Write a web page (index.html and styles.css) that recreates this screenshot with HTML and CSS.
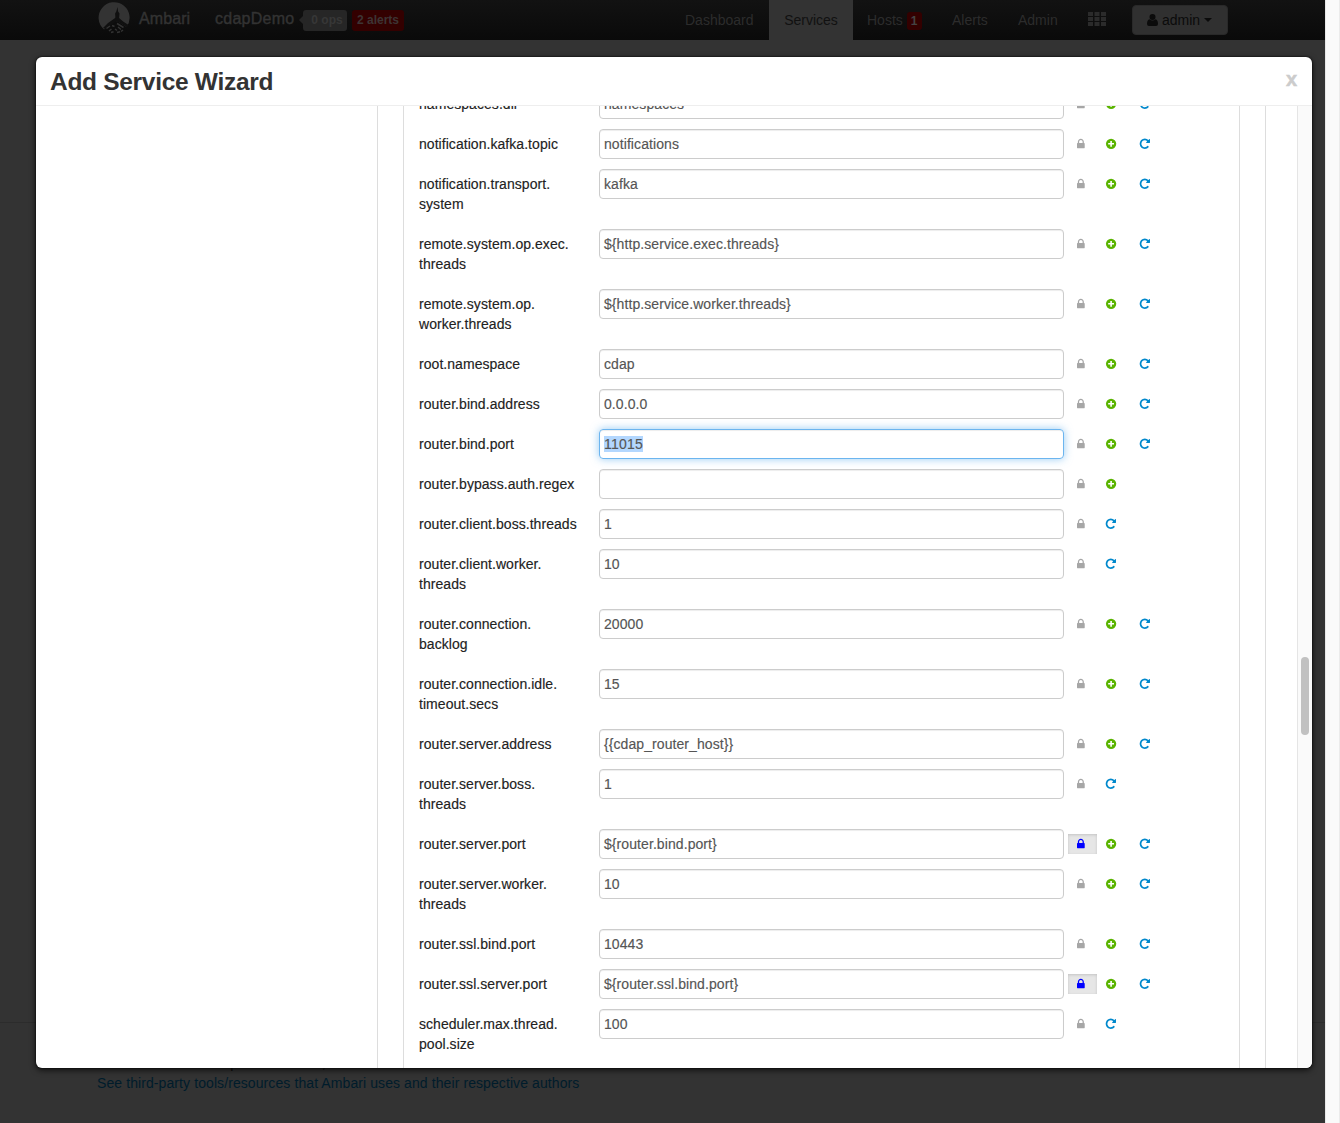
FILE: index.html
```html
<!DOCTYPE html>
<html lang="en">
<head>
<meta charset="utf-8">
<title>Ambari - cdapDemo</title>
<link rel="stylesheet" href="styles.css">
</head>
<body>
<svg class="sprite" aria-hidden="true">
  <symbol id="lock" viewBox="-149 9 1493 1792"><path d="M320 768h512v-192q0-106-75-181t-181-75-181 75-75 181v192zM1152 864v576q0 40-28 68t-68 28h-960q-40 0-68-28t-28-68v-576q0-40 28-68t68-28h32v-192q0-184 132-316t316-132 316 132 132 316v192h32q40 0 68 28t28 68z"/></symbol>
  <symbol id="plus" viewBox="0 0 12 12"><circle cx="6.100" cy="5.800" r="5.150"/><path d="M6.100 2.900v5.800M3.200 5.800h5.800" stroke="#fff" stroke-width="1.600"/></symbol>
  <symbol id="repeat" viewBox="24 38 1790 1790"><path d="M1664 256v448q0 26-19 45t-45 19h-448q-42 0-59-40-17-39 14-69l138-138q-148-137-349-137-104 0-198.5 40.5t-163.5 109.5-109.5 163.5-40.5 198.5 40.5 198.5 109.5 163.5 163.5 109.5 198.5 40.5q119 0 225-52t179-147q7-10 23-12 15 0 25 9l137 138q9 8 9.5 20.5t-7.5 22.5q-109 132-264 204.5t-327 72.5q-156 0-298-61t-245-164-164-245-61-298 61-298 164-245 245-164 298-61q147 0 284.5 55.5t244.5 156.5l130-129q29-31 70-14 39 17 39 59z"/></symbol>
</svg>
<div class="page">
  <nav class="navbar">
    <svg class="logo" viewBox="0 0 32 32"><path d="M6 27.500A15.500 15.500 0 1 1 28.500 25L20 19.500 17.500 19 14 20.500z" fill="#333"/><path d="M19.500 5l.6 4.500 1.400 2-.4 4.500 4 3.500 5.500 3.500-1.500 2.500-8.500-5.500-2.500-.5-10.600 7.500-2.500-1 5-5 6.500-4.500.9-1-.3-4 1.200-2z" fill="#101010"/><path d="M8.500 26.500l3.500-2.500M19 21.500l6.500 4M14 23.500l2.500 1M20 25l3 2.500M11 29l2.500-2M17 27l2 1.500M13 30.500l2.500-.8M19 30.500l3-.8M25 28l-2 1.500" stroke="#333" stroke-width="1.500" fill="none"/></svg>
    <span class="brand">Ambari</span>
    <span class="cluster">cdapDemo</span>
    <span class="badge ops">0 ops</span>
    <span class="badge alerts">2 alerts</span>
    <div class="menu">
      <a class="item dashboard">Dashboard</a>
      <a class="item active">Services</a>
      <a class="item hosts">Hosts <span class="count">1</span></a>
      <a class="item alerts-link">Alerts</a>
      <a class="item admin-link">Admin</a>
      <svg class="grid" viewBox="0 0 18 14"><path d="M0 0h5v4H0zM6.500 0h5v4h-5zM13 0h5v4h-5zM0 5h5v4H0zM6.500 5h5v4h-5zM13 5h5v4h-5zM0 10h5v4H0zM6.500 10h5v4h-5zM13 10h5v4h-5z"/></svg>
      <span class="user"><svg viewBox="0 0 11 12"><circle cx="5.500" cy="3" r="3"/><path d="M2.500 5.200Q5.500 7.800 8.500 5.200 11 6 11 10q0 2-2 2H2q-2 0-2-2 0-4 2.500-4.800z"/></svg>admin<i class="caret"></i></span>
    </div>
  </nav>
  <footer class="footer">
    <p>Licensed under the Apache License, Version 2.0.</p>
    <a>See third-party tools/resources that Ambari uses and their respective authors</a>
  </footer>
</div>
<div class="page-scroll"></div>

<section class="modal">
  <header class="modal-header"><h3>Add Service Wizard</h3><span class="close">x</span></header>
  <div class="modal-body">
    <div class="steps"></div>
    <div class="content"><div class="panel" id="properties"></div></div>
    <div class="scrollbar"><div class="thumb"></div></div>
  </div>
</section>
<script src="app.js"></script>
</body>
</html>
```
FILE: styles.css
```css
*, ::before, ::after { box-sizing: border-box; }
body {
  margin: 0;
  height: 1123px;
  display: flex;
  overflow: hidden;
  background: #333;
  color: #333;
  font: 14px/20px "Liberation Sans", Arial, sans-serif;
}
.sprite { position: absolute; width: 0; height: 0; }
.page { width: 1325px; display: flex; flex-direction: column; }
.page-scroll { width: 15px; background: #fafafa; border-left: 1px solid #e8e8e8; border-right: 1px solid #ebebeb; }

.navbar {
  height: 40px;
  display: flex;
  align-items: center;
  padding-left: 98px;
  background: linear-gradient(#121212, #0a0a0a);
  color: #333;
}
.logo { width: 32px; height: 32px; margin: -4px 9px 0 0; }
.brand, .cluster { font-size: 16px; margin-top: -3px; -webkit-text-stroke: .4px #333; }
.brand { width: 76px; letter-spacing: .1px; }
.cluster { width: 88px; letter-spacing: .25px; }
.badge { height: 21px; border-radius: 3px; font-weight: bold; font-size: 12px; line-height: 21px; text-align: center; }
.ops { width: 44px; background: #262626; color: #373737; position: relative; padding-left: 4px; }
.ops::before { content: ""; position: absolute; left: -4px; top: 6px; border: 4px solid transparent; border-left: 0; border-right-color: #262626; }
.alerts { width: 52px; margin-left: 5px; background: #300; color: #3d3434; }
.menu { display: flex; align-items: center; margin-left: 281px; height: 40px; color: #2c2c2c; }
.item { line-height: 40px; height: 40px; white-space: nowrap; }
.dashboard { width: 84px; }
.active { width: 84px; background: #333; color: #111; text-align: center; }
.hosts { width: 99px; padding-left: 14px; }
.count { display: inline-block; width: 15px; height: 18px; border-radius: 3px; background: #300; color: #444; font: bold 12px/18px "Liberation Sans", sans-serif; text-align: center; vertical-align: 0; }
.alerts-link { width: 66px; }
.admin-link { width: 70px; }
.grid { width: 18px; height: 14px; fill: #2b2b2b; margin-top: -2px; }
.user { display: flex; align-items: center; width: 96px; height: 30px; margin-left: 26px; padding-left: 14px; border-radius: 4px; background: #303030; border: 1px solid #292929; color: #0b0b0b; }
.user svg { width: 11px; height: 12px; margin-right: 4px; fill: #0b0b0b; }
.caret { margin-left: 4px; border: 4px solid transparent; border-top-color: #0b0b0b; border-bottom: 0; }

.footer { margin-top: 982px; height: 101px; padding: 30px 97px 0; border-top: 1px solid #2c2c2c; color: #0b0b0b; letter-spacing: .09px; }
.footer p { margin: 0; }
.footer a { color: #001c2b; }

.modal {
  position: absolute;
  left: 36px;
  top: 57px;
  width: 1276px;
  height: 1011px;
  display: flex;
  flex-direction: column;
  overflow: hidden;
  border-radius: 6px;
  background: #fff;
  box-shadow: 0 2px 6px rgba(0, 0, 0, .75), 0 0 2px #000;
}
.modal-header { height: 49px; flex: none; display: flex; justify-content: space-between; padding: 0 15px 0 14px; border-bottom: 1px solid #eee; }
.modal-header h3 { margin: 0; font-size: 24.500px; line-height: 49px; letter-spacing: -.3px; white-space: nowrap; }
.close { font-size: 20px; font-weight: bold; line-height: 45px; color: #ccc; -webkit-text-stroke: .5px #ccc; }
.modal-body { flex: 1; min-height: 0; display: flex; }
.steps { width: 342px; border-right: 1px solid #ddd; }
.content { flex: 1; padding-left: 25px; overflow: hidden; display: flex; }
.panel { width: 837px; height: 962px; overflow: hidden; border-left: 1px solid #ddd; border-right: 1px solid #ddd; padding-left: 15px; letter-spacing: .08px; }
.content::after { content: ""; width: 26px; border-right: 1px solid #ddd; }
.panel, .content::after { flex: none; }
.scrollbar { width: 15px; padding: 551px 3px 0; background: #fafafa; border-left: 1px solid #e5e5e5; }
.thumb { width: 8px; height: 78px; border-radius: 4px; background: #c1c1c1; }

.row { display: flex; align-items: flex-start; }
.row:first-child { margin-top: -17px; }
.name { width: 180px; padding: 5px 0 15px; color: #222; letter-spacing: .05px; white-space: pre-line; }
.field { width: 465px; height: 30px; padding: 4px; border: 1px solid #ccc; border-radius: 4px; color: #555; font: inherit; box-shadow: inset 0 1px 1px rgba(0, 0, 0, .075); white-space: pre; }
.name, .field { -webkit-text-stroke: .15px currentColor; }
.field.focused { border-color: #6cb5ef; box-shadow: inset 0 1px 1px rgba(0, 0, 0, .075), 0 0 8px rgba(82, 168, 236, .6); }
.field.focused span { display: inline-block; height: 16px; margin-top: 2px; line-height: 16px; letter-spacing: .25px; background: #b3d7fe; }
.lock { width: 29px; height: 20px; margin: 5px 8px 0 4px; padding: 4px 8px; display: flex; fill: #a6a6a6; }
.lock svg { width: 10px; height: 12px; flex: none; }
.lock.final { background: #e6e6e6; box-shadow: inset 0 1px 3px rgba(0, 0, 0, .15); fill: #00f; }
.action { width: 12px; height: 12px; margin: 9px 22px 0 0; }
.plus { fill: #5ab400; }
.repeat { fill: #08c; }
```
FILE: app.js
```js
// name, value, available actions (p = add override, r = restore default), state
const properties = [
  ["namespaces.dir", "namespaces", "pr"],
  ["notification.kafka.topic", "notifications", "pr"],
  ["notification.transport.\nsystem", "kafka", "pr"],
  ["remote.system.op.exec.\nthreads", "${http.service.exec.threads}", "pr"],
  ["remote.system.op.\nworker.threads", "${http.service.worker.threads}", "pr"],
  ["root.namespace", "cdap", "pr"],
  ["router.bind.address", "0.0.0.0", "pr"],
  ["router.bind.port", "11015", "pr", "focused"],
  ["router.bypass.auth.regex", "", "p"],
  ["router.client.boss.threads", "1", "r"],
  ["router.client.worker.\nthreads", "10", "r"],
  ["router.connection.\nbacklog", "20000", "pr"],
  ["router.connection.idle.\ntimeout.secs", "15", "pr"],
  ["router.server.address", "{{cdap_router_host}}", "pr"],
  ["router.server.boss.\nthreads", "1", "r"],
  ["router.server.port", "${router.bind.port}", "pr", "final"],
  ["router.server.worker.\nthreads", "10", "pr"],
  ["router.ssl.bind.port", "10443", "pr"],
  ["router.ssl.server.port", "${router.ssl.bind.port}", "pr", "final"],
  ["scheduler.max.thread.\npool.size", "100", "r"]
];
const icon = (id, cls) => `<svg class="${cls}"><use href="#${id}"/></svg>`;
document.getElementById("properties").innerHTML = properties.map(([name, value, actions, state]) => `
  <div class="row">
    <div class="name">${name}</div>
    <div class="field ${state === "focused" ? "focused" : ""}"><span>${value}</span></div>
    <div class="lock ${state === "final" ? "final" : ""}">${icon("lock", "")}</div>
    ${actions.includes("p") ? icon("plus", "action plus") : ""}
    ${actions.includes("r") ? icon("repeat", "action repeat") : ""}
  </div>`).join("");
```
